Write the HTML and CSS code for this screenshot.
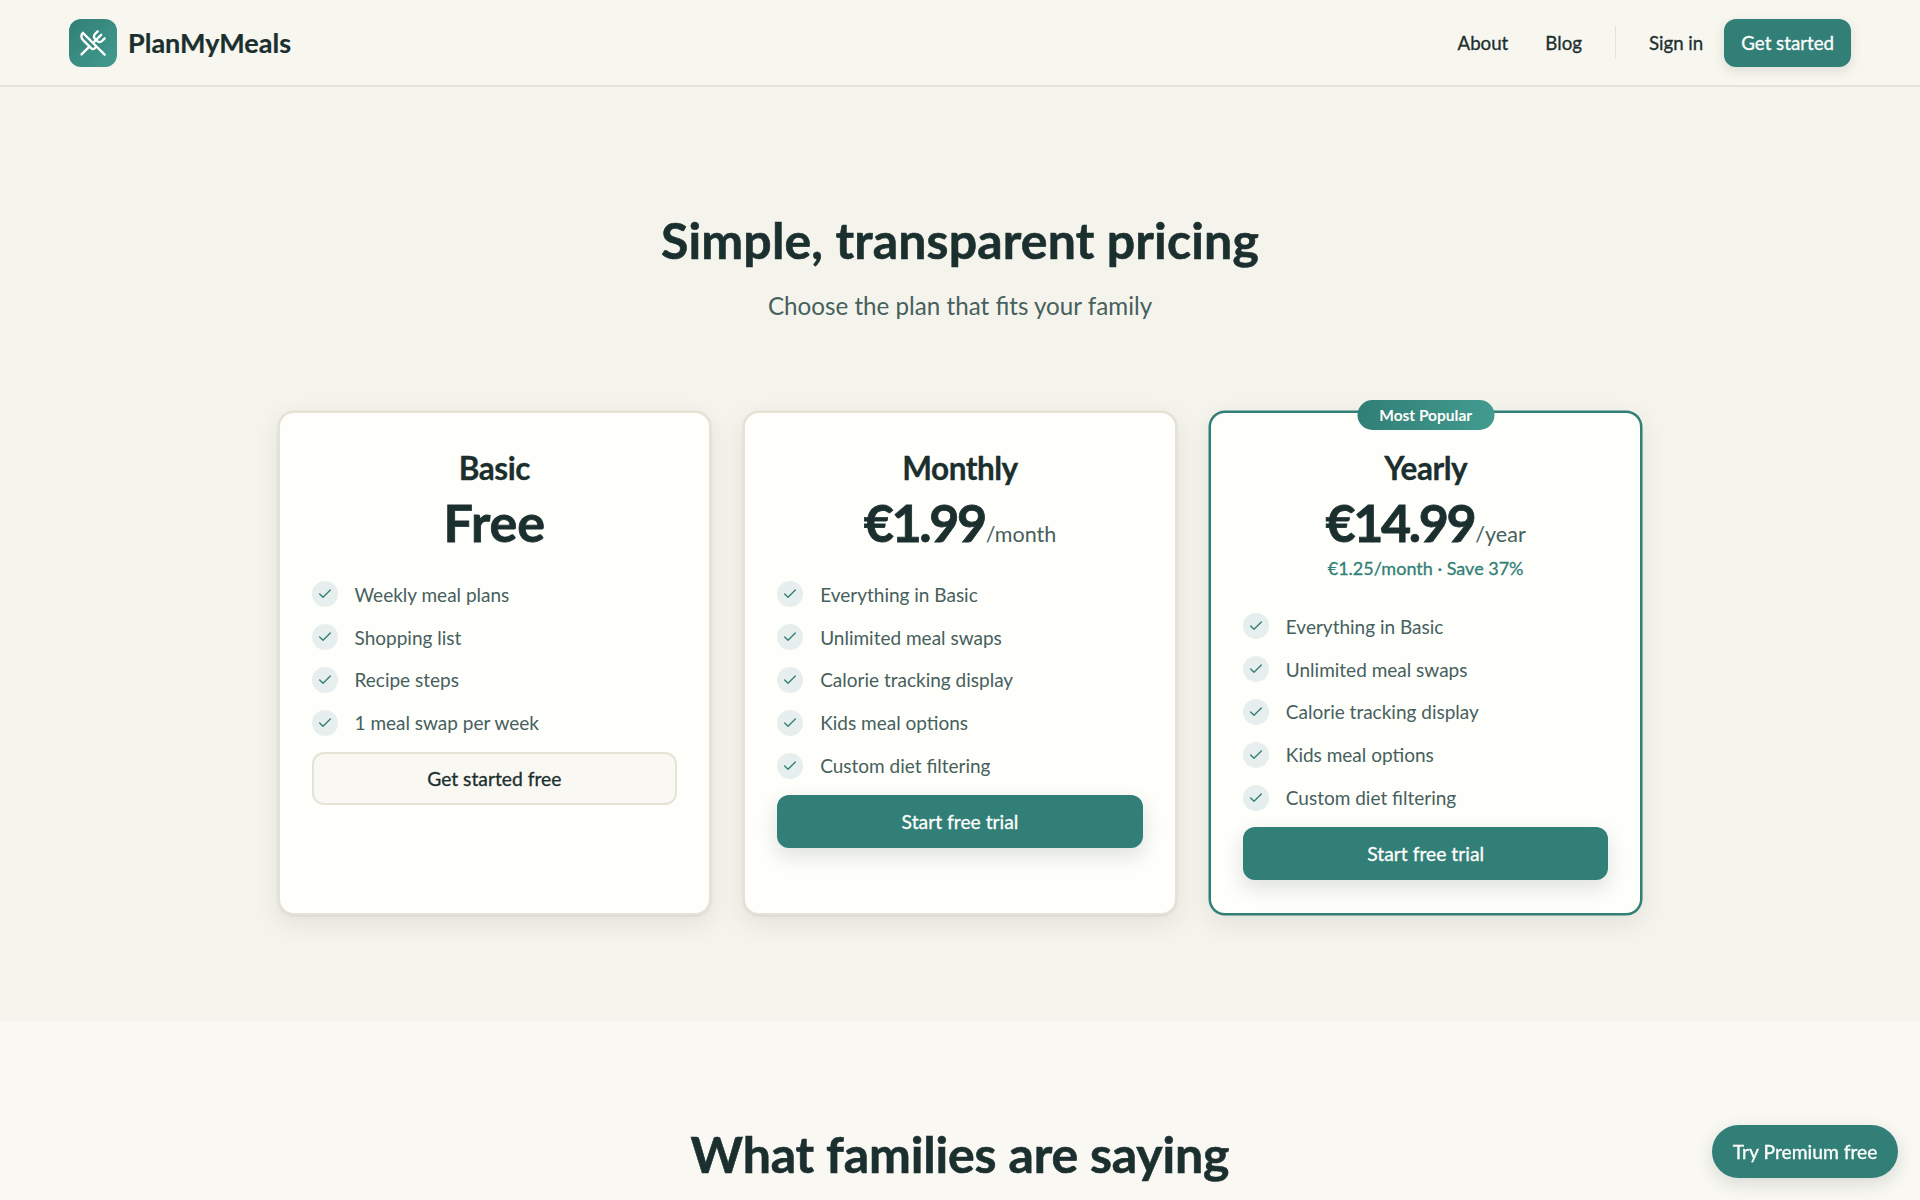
FILE: index.html
```html
<!DOCTYPE html>
<html lang="en">
<head>
    <meta charset="UTF-8">
    <meta name="viewport" content="width=device-width, initial-scale=1.0">
    <title>PlanMyMeals</title>
    <link rel="stylesheet" href="styles.css">
</head>
<body>
    <!-- Header -->
    <header class="header">
        <a class="brand" href="#">
            <span class="brandIcon">
                <svg width="28" height="28" viewBox="0 0 24 24" fill="none" stroke="currentColor" stroke-width="2" stroke-linecap="round" stroke-linejoin="round">
                    <path d="m16 2-2.3 2.3a3 3 0 0 0 0 4.2l1.8 1.8a3 3 0 0 0 4.2 0L22 8"/>
                    <path d="M15 15 3.3 3.3a4.2 4.2 0 0 0 0 6l7.3 7.3c.7.7 2 .7 2.8 0L15 15Zm0 0 7 7"/>
                    <path d="m2.1 21.8 6.4-6.3"/>
                    <path d="m19 5-7 7"/>
                </svg>
            </span>
            <span class="brandName">PlanMyMeals</span>
        </a>
        <nav class="nav">
            <a class="navLink" href="#">About</a>
            <a class="navLink" href="#">Blog</a>
            <span class="navDivider"></span>
            <a class="navLink signIn" href="#">Sign in</a>
            <a class="navButton" href="#">Get started</a>
        </nav>
    </header>

    <main>
        <!-- Pricing -->
        <section class="pricing">
            <h1 class="sectionTitle">Simple, transparent pricing</h1>
            <p class="sectionSub">Choose the plan that fits your family</p>

            <div class="plans">
                <div class="plan">
                    <h3 class="planName">Basic</h3>
                    <div class="planPrice"><span class="amount free">Free</span></div>
                    <ul class="features">
                        <li><span class="check"><svg viewBox="0 0 24 24"><path d="M20 6 9 17l-5-5"/></svg></span>Weekly meal plans</li>
                        <li><span class="check"><svg viewBox="0 0 24 24"><path d="M20 6 9 17l-5-5"/></svg></span>Shopping list</li>
                        <li><span class="check"><svg viewBox="0 0 24 24"><path d="M20 6 9 17l-5-5"/></svg></span>Recipe steps</li>
                        <li><span class="check"><svg viewBox="0 0 24 24"><path d="M20 6 9 17l-5-5"/></svg></span>1 meal swap per week</li>
                    </ul>
                    <a class="planButton light" href="#">Get started free</a>
                </div>

                <div class="plan">
                    <h3 class="planName">Monthly</h3>
                    <div class="planPrice"><span class="amount">€1.99</span><span class="period">/month</span></div>
                    <ul class="features">
                        <li><span class="check"><svg viewBox="0 0 24 24"><path d="M20 6 9 17l-5-5"/></svg></span>Everything in Basic</li>
                        <li><span class="check"><svg viewBox="0 0 24 24"><path d="M20 6 9 17l-5-5"/></svg></span>Unlimited meal swaps</li>
                        <li><span class="check"><svg viewBox="0 0 24 24"><path d="M20 6 9 17l-5-5"/></svg></span>Calorie tracking display</li>
                        <li><span class="check"><svg viewBox="0 0 24 24"><path d="M20 6 9 17l-5-5"/></svg></span>Kids meal options</li>
                        <li><span class="check"><svg viewBox="0 0 24 24"><path d="M20 6 9 17l-5-5"/></svg></span>Custom diet filtering</li>
                    </ul>
                    <a class="planButton" href="#">Start free trial</a>
                </div>

                <div class="plan popular">
                    <span class="badge">Most Popular</span>
                    <h3 class="planName">Yearly</h3>
                    <div class="planPrice"><span class="amount">€14.99</span><span class="period">/year</span></div>
                    <p class="planNote">€1.25/month · Save 37%</p>
                    <ul class="features">
                        <li><span class="check"><svg viewBox="0 0 24 24"><path d="M20 6 9 17l-5-5"/></svg></span>Everything in Basic</li>
                        <li><span class="check"><svg viewBox="0 0 24 24"><path d="M20 6 9 17l-5-5"/></svg></span>Unlimited meal swaps</li>
                        <li><span class="check"><svg viewBox="0 0 24 24"><path d="M20 6 9 17l-5-5"/></svg></span>Calorie tracking display</li>
                        <li><span class="check"><svg viewBox="0 0 24 24"><path d="M20 6 9 17l-5-5"/></svg></span>Kids meal options</li>
                        <li><span class="check"><svg viewBox="0 0 24 24"><path d="M20 6 9 17l-5-5"/></svg></span>Custom diet filtering</li>
                    </ul>
                    <a class="planButton" href="#">Start free trial</a>
                </div>
            </div>
        </section>

        <!-- Testimonials -->
        <section class="testimonials">
            <h2 class="sectionTitle tight">What families are saying</h2>
        </section>
    </main>

    <a class="floatButton" href="#">Try Premium free</a>
</body>
</html>
```

FILE: styles.css
```css
:root {
    --text-color: #1b2f2e;
    --muted-color: #46605d;
    --teal: #317f77;
    --teal-light: #429b8f;
    --line-color: #e5e2d6;
    --page-bg: #f5f4ec;
    --header-bg: #f7f6ef;
    --soft-bg: #f9f8f3;
    --card-bg: #fefefb;
}
* {
    margin: 0;
    padding: 0;
    box-sizing: border-box;
}
body {
    font-family: "Lato", "Liberation Sans", sans-serif;
    color: var(--text-color);
    background-color: var(--soft-bg);
}
a {
    color: inherit;
    text-decoration: none;
}

/* header */
.header {
    display: flex;
    align-items: center;
    justify-content: space-between;
    height: 87px;
    padding: 0 69px;
    background-color: var(--header-bg);
    border-bottom: 2px solid var(--line-color);
}
.brand {
    display: flex;
    align-items: center;
    gap: 11px;
}
.brandIcon {
    display: flex;
    align-items: center;
    justify-content: center;
    width: 48px;
    height: 48px;
    border-radius: 12px;
    color: #fefefc;
    background: linear-gradient(135deg, var(--teal), var(--teal-light));
}
.brandName {
    font-size: 27px;
    font-weight: 700;
    -webkit-text-stroke: 0.2px;
}
.nav {
    display: flex;
    align-items: center;
}
.navLink {
    font-size: 18.7px;
    margin-right: 37px;
    -webkit-text-stroke: 0.3px;
}
.navDivider {
    width: 1px;
    height: 33px;
    margin-left: -4px;
    margin-right: 33px;
    background-color: var(--line-color);
}
.signIn {
    margin-right: 21px;
}
.navButton {
    display: flex;
    align-items: center;
    height: 48px;
    padding: 0 17px;
    border-radius: 12px;
    font-size: 18.7px;
    color: #fefefc;
    background-color: var(--teal);
    box-shadow: 0 4px 12px rgba(27, 47, 46, 0.12);
    -webkit-text-stroke: 0.3px;
}

/* pricing */
.pricing {
    height: 934px;
    padding-top: 123px;
    background-color: var(--page-bg);
}
.sectionTitle {
    font-size: 50px;
    line-height: 60px;
    font-weight: 700;
    text-align: center;
    letter-spacing: 0.15px;
    -webkit-text-stroke: 0.6px;
}
.tight {
    letter-spacing: -0.15px;
}
.sectionSub {
    margin-top: 20px;
    font-size: 24.2px;
    line-height: 32px;
    text-align: center;
    color: var(--muted-color);
}
.plans {
    display: grid;
    grid-template-columns: repeat(3, 1fr);
    gap: 32px;
    width: 1365px;
    margin: 89px auto 0;
}
.plan {
    position: relative;
    height: 504px;
    padding: 32px;
    text-align: center;
    background-color: var(--card-bg);
    border: 2px solid var(--line-color);
    border-radius: 16px;
    box-shadow: 0 0 0 0.5px var(--line-color), 0 1px 2px rgba(90, 80, 50, 0.16), 0 8px 24px rgba(27, 47, 46, 0.09);
}
.popular {
    border-color: var(--teal);
    box-shadow: 0 0 0 0.5px var(--teal), 0 8px 24px rgba(27, 47, 46, 0.09);
}
.badge {
    position: absolute;
    top: -13px;
    left: 50%;
    transform: translateX(-50%);
    width: 137px;
    height: 30px;
    border-radius: 15px;
    font-size: 15.5px;
    font-weight: 700;
    line-height: 30px;
    color: #fefefc;
    background: linear-gradient(90deg, var(--teal), var(--teal-light));
}
.planName {
    margin-top: 1.5px;
    font-size: 31.5px;
    line-height: 42px;
    font-weight: 700;
    letter-spacing: -0.5px;
    -webkit-text-stroke: 0.3px;
}
.planPrice {
    margin-top: -0.5px;
    line-height: 68px;
}
.amount {
    font-size: 52px;
    font-weight: 700;
    letter-spacing: -2.4px;
    -webkit-text-stroke: 0.8px;
}
.free {
    letter-spacing: 0;
}
.period {
    margin-left: 1px;
    font-size: 21.5px;
    color: var(--muted-color);
}
.planNote {
    font-size: 18px;
    line-height: 24px;
    margin-top: -14px;
    margin-bottom: 25px;
    color: var(--teal);
    -webkit-text-stroke: 0.3px;
}
.features {
    list-style: none;
    margin-top: 3px;
    text-align: left;
}
.features li {
    display: flex;
    align-items: center;
    gap: 17px;
    height: 42.8px;
    font-size: 19px;
    color: var(--muted-color);
}
.check {
    display: flex;
    align-items: center;
    justify-content: center;
    width: 26px;
    height: 26px;
    border-radius: 50%;
    background-color: #e6efed;
}
.check svg {
    width: 16px;
    height: 16px;
    fill: none;
    stroke: var(--teal);
    stroke-width: 2;
    stroke-linecap: round;
    stroke-linejoin: round;
}
.planButton {
    display: flex;
    align-items: center;
    justify-content: center;
    height: 53px;
    margin-top: 8px;
    border-radius: 12px;
    font-size: 19.3px;
    color: #fefefc;
    background-color: var(--teal);
    box-shadow: 0 8px 20px rgba(27, 47, 46, 0.14);
    -webkit-text-stroke: 0.3px;
}
.light {
    color: var(--text-color);
    background-color: #f9f8f3;
    border: 2px solid var(--line-color);
    box-shadow: none;
}

/* testimonials */
.testimonials {
    padding-top: 103px;
    padding-bottom: 14px;
}

/* floating button */
.floatButton {
    position: fixed;
    right: 22px;
    bottom: 22px;
    display: flex;
    align-items: center;
    height: 53px;
    padding: 0 20.5px;
    border-radius: 100px;
    font-size: 19.3px;
    color: #fefefc;
    background-color: var(--teal);
    box-shadow: 0 6px 18px rgba(27, 47, 46, 0.14);
    -webkit-text-stroke: 0.3px;
}
```
